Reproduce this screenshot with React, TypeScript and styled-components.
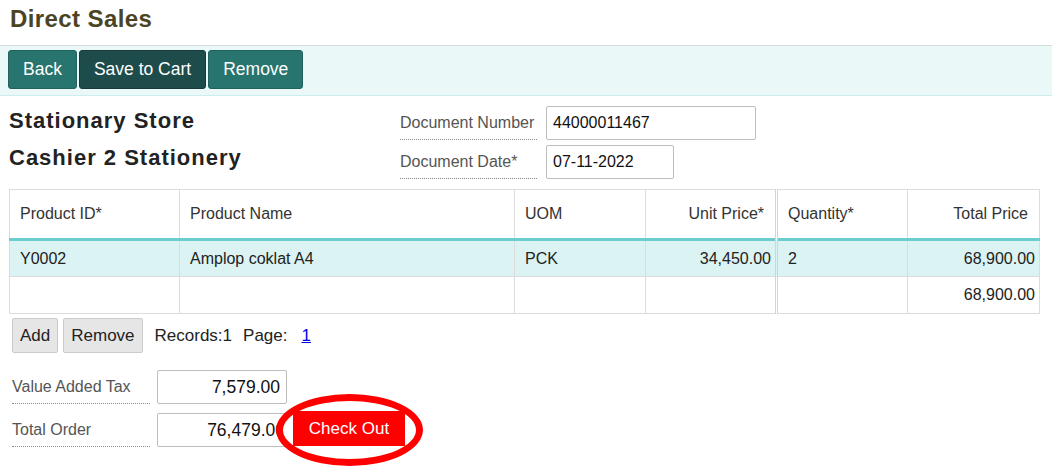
import styled, { createGlobalStyle } from "styled-components";

const GlobalStyle = createGlobalStyle`
  body {
    margin: 0;
    background: #fff;
    font-family: "Liberation Sans", Arial, sans-serif;
    color: #222;
  }
`;

const Page = styled.div`
  width: 1052px;
  height: 469px;
  overflow: hidden;
`;

const Title = styled.h1`
  box-sizing: border-box;
  height: 45px;
  margin: 0;
  padding: 5px 10px 0;
  font-size: 24px;
  line-height: 28px;
  letter-spacing: 0.4px;
  font-weight: bold;
  color: #4b4424;
`;

const Toolbar = styled.div`
  display: flex;
  gap: 2px;
  padding: 4px 8px 6px;
  background: #ebf8f8;
  border-top: 1px solid #d5dcdc;
  border-bottom: 1px solid #cdeeee;
`;

const ToolButton = styled.button<{ dark?: boolean }>`
  height: 39px;
  padding: 0 14px;
  border: 1px solid ${({ dark }) => (dark ? "#163b3a" : "#1f625e")};
  border-radius: 3px;
  background: ${({ dark }) => (dark ? "#1e4c4b" : "#28746f")};
  color: #fff;
  font-family: inherit;
  font-size: 17.5px;
`;

const InfoSection = styled.div`
  display: flex;
  align-items: flex-start;
  padding-top: 6px;
`;

const StoreBlock = styled.div`
  width: 400px;
  padding-left: 9px;
  box-sizing: border-box;
`;

const StoreName = styled.div`
  font-size: 22px;
  line-height: 37px;
  letter-spacing: 1px;
  font-weight: bold;
  color: #222;
`;

const DocForm = styled.div`
  display: flex;
  flex-direction: column;
  gap: 5px;
  margin-top: 4px;
`;

const FormRow = styled.div`
  display: flex;
  align-items: stretch;
  height: 34px;
`;

const FieldLabel = styled.div<{ width: number }>`
  width: ${({ width }) => width}px;
  flex-shrink: 0;
  font-size: 16px;
  line-height: 34px;
  color: #555;
  border-bottom: 1px dotted #8a8a8a;
  box-sizing: border-box;
  white-space: nowrap;
`;

const TextInput = styled.input<{ width: number; right?: boolean; flush?: boolean }>`
  box-sizing: border-box;
  width: ${({ width }) => width}px;
  height: 100%;
  margin-left: ${({ right }) => (right ? 7 : 9)}px;
  padding: 0 ${({ flush }) => (flush ? 1 : 6)}px 0 6px;
  border: 1px solid #bdbdbd;
  border-radius: 2px;
  font-family: inherit;
  font-size: ${({ right }) => (right ? 17.5 : 16)}px;
  color: #111;
  text-align: ${({ right }) => (right ? "right" : "left")};
  background: #fff;
`;

const Table = styled.table`
  margin: 10px 0 0 9px;
  width: 1030px;
  table-layout: fixed;
  border-collapse: collapse;
  font-size: 16px;
`;

const HeadCell = styled.th<{ right?: boolean; split?: boolean }>`
  height: 50px;
  padding: 0 ${({ right }) => (right ? 11 : 6)}px 0 10px;
  border: 1px solid #dcdcdc;
  border-left: ${({ split }) => (split ? "3px double #d4d4d4" : "1px solid #dcdcdc")};
  border-bottom: 3px solid #6dcccc;
  font-weight: normal;
  color: #333;
  text-align: ${({ right }) => (right ? "right" : "left")};
  box-sizing: border-box;
`;

const Row = styled.tr<{ selected?: boolean }>`
  background: ${({ selected }) => (selected ? "#dcf3f3" : "#fff")};
`;

const Cell = styled.td<{ right?: boolean; split?: boolean }>`
  height: 37px;
  padding: 0 ${({ right }) => (right ? 4 : 6)}px 0 10px;
  border: 1px solid #dcdcdc;
  border-left: ${({ split }) => (split ? "3px double #d4d4d4" : "1px solid #dcdcdc")};
  color: #222;
  text-align: ${({ right }) => (right ? "right" : "left")};
  box-sizing: border-box;
`;

const Pager = styled.div`
  display: flex;
  align-items: center;
  gap: 5px;
  margin: 4px 0 0 12px;
  font-size: 17px;
`;

const GreyButton = styled.button`
  height: 35px;
  padding: 0 7px;
  border: 1px solid #cbcbcb;
  border-radius: 2px;
  background: #e6e6e6;
  color: #222;
  font-family: inherit;
  font-size: 17px;
`;

const PagerText = styled.span<{ gap: number }>`
  margin-left: ${({ gap }) => gap}px;
`;

const PageLink = styled.a`
  margin-left: 9px;
  color: #0000ee;
  text-decoration: underline;
`;

const Totals = styled.div`
  display: flex;
  flex-direction: column;
  gap: 9px;
  margin: 17px 0 0 12px;
`;

const TotalRow = styled.div`
  display: flex;
  align-items: stretch;
  height: 34px;
`;

const CheckoutWrap = styled.div`
  position: relative;
  margin: -2px 0 0 6px;
  height: 35px;
`;

const CheckoutButton = styled.button`
  position: relative;
  z-index: 1;
  width: 112px;
  height: 35px;
  border: none;
  background: #ff0000;
  color: #fff;
  font-family: inherit;
  font-size: 17px;
`;

const Highlight = styled.span`
  position: absolute;
  z-index: 0;
  left: -17px;
  top: -17px;
  width: 147px;
  height: 72px;
  box-sizing: border-box;
  border: 7px solid #ff0000;
  border-radius: 50%;
  background: #fff;
`;

const columns = [
  { title: "Product ID*", width: 170 },
  { title: "Product Name", width: 335 },
  { title: "UOM", width: 131 },
  { title: "Unit Price*", width: 131, right: true },
  { title: "Quantity*", width: 131, split: true },
  { title: "Total Price", width: 132, right: true },
];

const rows = [
  { cells: ["Y0002", "Amplop coklat A4", "PCK", "34,450.00", "2", "68,900.00"], selected: true },
  { cells: ["", "", "", "", "", "68,900.00"] },
];

export default function App() {
  return (
    <Page>
      <GlobalStyle />
      <Title>Direct Sales</Title>
      <Toolbar>
        <ToolButton>Back</ToolButton>
        <ToolButton dark>Save to Cart</ToolButton>
        <ToolButton>Remove</ToolButton>
      </Toolbar>

      <InfoSection>
        <StoreBlock>
          <StoreName>Stationary Store</StoreName>
          <StoreName>Cashier 2 Stationery</StoreName>
        </StoreBlock>
        <DocForm>
          <FormRow>
            <FieldLabel width={137}>Document Number</FieldLabel>
            <TextInput width={210} defaultValue="44000011467" />
          </FormRow>
          <FormRow>
            <FieldLabel width={137}>Document Date*</FieldLabel>
            <TextInput width={128} defaultValue="07-11-2022" />
          </FormRow>
        </DocForm>
      </InfoSection>

      <Table>
        <colgroup>
          {columns.map((c) => (
            <col key={c.title} style={{ width: c.width }} />
          ))}
        </colgroup>
        <thead>
          <tr>
            {columns.map((c) => (
              <HeadCell key={c.title} right={c.right} split={c.split}>
                {c.title}
              </HeadCell>
            ))}
          </tr>
        </thead>
        <tbody>
          {rows.map((r, i) => (
            <Row key={i} selected={r.selected}>
              {r.cells.map((v, j) => (
                <Cell key={j} right={columns[j].right} split={columns[j].split}>
                  {v}
                </Cell>
              ))}
            </Row>
          ))}
        </tbody>
      </Table>

      <Pager>
        <GreyButton>Add</GreyButton>
        <GreyButton>Remove</GreyButton>
        <PagerText gap={7}>Records:1</PagerText>
        <PagerText gap={6}>Page:</PagerText>
        <PageLink href="#">1</PageLink>
      </Pager>

      <Totals>
        <TotalRow>
          <FieldLabel width={138}>Value Added Tax</FieldLabel>
          <TextInput width={130} right defaultValue="7,579.00" />
        </TotalRow>
        <TotalRow>
          <FieldLabel width={138}>Total Order</FieldLabel>
          <TextInput width={130} right flush defaultValue="76,479.00" />
          <CheckoutWrap>
            <Highlight />
            <CheckoutButton>Check Out</CheckoutButton>
          </CheckoutWrap>
        </TotalRow>
      </Totals>
    </Page>
  );
}
